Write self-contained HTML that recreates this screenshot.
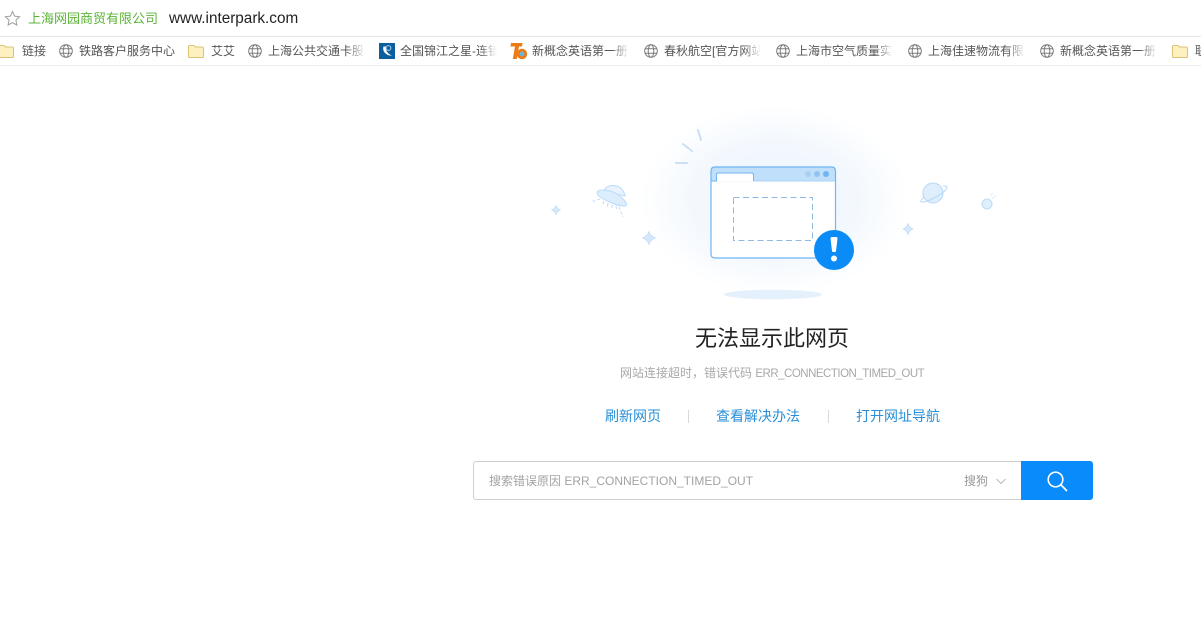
<!DOCTYPE html>
<html lang="zh-CN">
<head>
<meta charset="utf-8">
<title>无法显示此网页</title>
<style>
html,body{margin:0;padding:0;background:#fff}
body{width:1201px;height:635px;position:relative;overflow:hidden;font-family:"Liberation Sans","Noto Sans CJK SC",sans-serif}
.a{position:absolute;white-space:nowrap}
.bm{position:absolute;top:43px;height:17px;line-height:17px;font-size:12px;color:#555;white-space:nowrap;overflow:hidden}
.fade{width:97px;-webkit-mask-image:linear-gradient(90deg,#000 82%,transparent 100%);mask-image:linear-gradient(90deg,#000 82%,transparent 100%)}
.ic{position:absolute}
.link{position:absolute;top:407px;line-height:18px;font-size:14px;color:#2a8fd8;white-space:nowrap}
.sep{position:absolute;top:410px;width:1px;height:13px;background:#d9d9d9}
</style>
</head>
<body>
<svg class="ic" style="left:4px;top:10px" width="17" height="17" viewBox="0 0 17 17"><path d="M8.500 1.500l2.100 4.600 5 .6-3.700 3.400 1 5-4.400-2.500-4.400 2.500 1-5L1.400 6.700l5-.6z" fill="none" stroke="#a0a0a0" stroke-width="1"/></svg>
<div class="a" style="left:28px;top:10px;line-height:18px;font-size:13px;color:#5cb338">上海网园商贸有限公司</div>
<div class="a" style="left:169px;top:9px;line-height:20px;font-size:15.300px;color:#222">www.interpark.com</div>
<div class="a" style="left:0;top:36px;width:1201px;height:1px;background:#e6e6e6"></div>
<div class="a" style="left:0;top:65px;width:1201px;height:1px;background:#ececec"></div>

<svg width="0" height="0" style="position:absolute"><defs>
<g id="globe" fill="none" stroke="#7a7a7a" stroke-width="1"><circle cx="7" cy="7" r="6.300"/><ellipse cx="7" cy="7" rx="2.800" ry="6.300"/><path d="M1.300 4.700h11.400M1.300 9.300h11.400"/></g>
<g id="folder"><path d="M.5 3Q.5 1.500 2 1.500h4l1.500 1.500H14q1.500 0 1.500 1.500v8q0 1-1 1H1.500q-1 0-1-1z" fill="#fdf1c0" stroke="#dcc277"/></g>
</defs></svg>

<svg class="ic" style="left:-2px;top:44px" width="16" height="15"><use href="#folder"/></svg>
<div class="bm" style="left:22px">链接</div>
<svg class="ic" style="left:59px;top:44px" width="14" height="14"><use href="#globe"/></svg>
<div class="bm" style="left:79px">铁路客户服务中心</div>
<svg class="ic" style="left:188px;top:44px" width="16" height="15"><use href="#folder"/></svg>
<div class="bm" style="left:211px">艾艾</div>
<svg class="ic" style="left:248px;top:44px" width="14" height="14"><use href="#globe"/></svg>
<div class="bm fade" style="left:268px">上海公共交通卡股</div>
<svg class="ic" style="left:379px;top:43px" width="16" height="16" viewBox="0 0 16 16"><rect width="16" height="16" fill="#0b5f9e"/><path d="M4.500 3.500C3 8 7 13 13 12.500C9 11 6.500 8 7 3.500z" fill="#fff"/><circle cx="9.500" cy="5" r="2.400" fill="none" stroke="#a9d3ee"/></svg>
<div class="bm fade" style="left:400px">全国锦江之星-连锁</div>
<svg class="ic" style="left:510px;top:42px" width="18" height="18" viewBox="0 0 18 18"><path d="M1 1h11.500l-.6 3.500H9L6.800 17H2.800L5 4.500H.5z" fill="#ee7b16"/><circle cx="12" cy="12" r="5.200" fill="#ee7b16"/><circle cx="12" cy="12" r="2.500" fill="#6cb4dc"/></svg>
<div class="bm fade" style="left:532px">新概念英语第一册</div>
<svg class="ic" style="left:644px;top:44px" width="14" height="14"><use href="#globe"/></svg>
<div class="bm fade" style="left:664px">春秋航空[官方网站</div>
<svg class="ic" style="left:776px;top:44px" width="14" height="14"><use href="#globe"/></svg>
<div class="bm fade" style="left:796px">上海市空气质量实</div>
<svg class="ic" style="left:908px;top:44px" width="14" height="14"><use href="#globe"/></svg>
<div class="bm fade" style="left:928px">上海佳速物流有限</div>
<svg class="ic" style="left:1040px;top:44px" width="14" height="14"><use href="#globe"/></svg>
<div class="bm fade" style="left:1060px">新概念英语第一册</div>
<svg class="ic" style="left:1172px;top:44px" width="16" height="15"><use href="#folder"/></svg>
<div class="bm" style="left:1195px">联</div>

<!-- illustration -->
<svg class="ic" style="left:540px;top:100px" width="470" height="210" viewBox="540 100 470 210">
<defs>
<radialGradient id="glow"><stop offset="0" stop-color="#eaf4fe"/><stop offset=".6" stop-color="#f3f8fe"/><stop offset="1" stop-color="#fff"/></radialGradient>
</defs>
<ellipse cx="775" cy="200" rx="135" ry="95" fill="url(#glow)"/>
<g stroke="#cadff3" stroke-width="2" stroke-linecap="round" fill="none">
<path d="M698 130l3 10M683 144l9 7M676 163h11"/>
</g>
<path d="M711.500 181v-10q0-4 4-4h116q4 0 4 4v10z" fill="#bfdffb"/>
<path d="M711.500 181.500v72q0 4 4 4h116q3 0 3.500-4v-72z" fill="#fff"/>
<path d="M711 181h5.500v-6q0-2 2-2h33q2 0 2 2v6" fill="#fff" stroke="#6fb5f3" stroke-width="1"/>
<path d="M711 181v-10q0-4 4-4h116.500q4 0 4 4v83q0 4-4 4H715q-4 0-4-4z" fill="none" stroke="#6fb5f3" stroke-width="1.200"/>
<path d="M754 181h81" stroke="#a9d3f7" stroke-width="1"/>
<circle cx="808" cy="174" r="3" fill="#a9d0f3"/><circle cx="817" cy="174" r="3" fill="#93c4f1"/><circle cx="826" cy="174" r="3" fill="#72b4f0"/>
<rect x="733.500" y="197.500" width="79" height="43" fill="none" stroke="#8fb9e3" stroke-width="1" stroke-dasharray="6 3.500"/>
<circle cx="834" cy="250" r="20" fill="#0a8bf5"/>
<path d="M830.500 238.500q0-1.500 1.500-1.500h4q1.500 0 1.500 1.500l-1.500 12.500q-.2 1-1 1h-2q-.8 0-1-1z" fill="#fff"/>
<circle cx="834" cy="258.500" r="3" fill="#fff"/>
<ellipse cx="773" cy="294.500" rx="49" ry="4.800" fill="#e4f0fb"/>
<!-- sparkles -->
<g fill="#d6e9fb" stroke="#c2dcf6" stroke-width=".8" stroke-linejoin="round">
<path d="M649 231.500q1.200 4.800 6.500 6.500q-5.300 1.700-6.500 6.500q-1.200-4.800-6.500-6.500q5.300-1.700 6.500-6.500z"/>
<path d="M556 205.500q.8 3.500 4.500 4.500q-3.700 1-4.500 4.500q-.8-3.500-4.500-4.500q3.700-1 4.500-4.500z"/>
<path d="M908 223.500q1 4 5 5.500q-4 1.500-5 5.500q-1-4-5-5.500q4-1.500 5-5.500z"/>
</g>
<!-- ufo -->
<g stroke="#b9dbf8" stroke-width="1">
<path d="M604 191q2-6 10-5.500q9 1 11 10.500z" fill="#e8f3fd"/>
<path d="M597 193q0-3 5-3q8 0 15 4q8 5 9.500 10q.5 2.500-3 2q-7-.5-14-4q-12-5-12.500-9z" fill="#dcedfc"/>
<path d="M604 201l-1 3M608 203l-.5 3.500M612 205l0 3M616 206l.5 3" />
<path d="M600 199l-9 3M619 207l4 10" stroke-dasharray="3 2" fill="none" stroke="#c4ddf4"/>
</g>
<!-- planet -->
<g stroke="#b5d8f7" stroke-width="1" fill="none">
<circle cx="933" cy="193" r="10" fill="#deeefc"/>
<path d="M924 197q-4 4-3 5q3 1 13-4q10-5 13-10q.5-2-4-2"/>
</g>
<!-- comet -->
<circle cx="987" cy="204" r="5" fill="#e0effc" stroke="#bcdcf8"/>
<path d="M992 199l4-4M990 196l3-3" stroke="#e2eefa" stroke-width="1"/>
</svg>

<div class="a" style="left:695px;top:324px;line-height:30px;font-size:22px;color:#222">无法显示此网页</div>
<div class="a" style="left:620px;top:365px;line-height:17px;font-size:12px;color:#a8a8a8">网站连接超时，错误代码 <span style="font-size:11.500px;letter-spacing:-.5px">ERR_CONNECTION_TIMED_OUT</span></div>

<div class="link" style="left:605px">刷新网页</div>
<div class="sep" style="left:688px"></div>
<div class="link" style="left:716px">查看解决办法</div>
<div class="sep" style="left:828px"></div>
<div class="link" style="left:856px">打开网址导航</div>

<div class="a" style="left:473px;top:461px;width:549px;height:37px;border:1px solid #cfcfcf;border-right:0;border-radius:3px 0 0 3px"></div>
<div class="a" style="left:489px;top:473px;line-height:17px;font-size:12px;color:#a3a3a3">搜索错误原因 ERR_CONNECTION_TIMED_OUT</div>
<div class="a" style="left:964px;top:473px;line-height:17px;font-size:12px;color:#999">搜狗</div>
<svg class="ic" style="left:996px;top:478px" width="10" height="7"><path d="M.5 1l4.500 4.500L9.500 1" fill="none" stroke="#bbb"/></svg>
<div class="a" style="left:1021px;top:461px;width:72px;height:39px;background:#0a8bfc;border-radius:0 3px 3px 0"></div>
<svg class="ic" style="left:1045px;top:469px" width="24" height="24" viewBox="0 0 24 24"><circle cx="10.500" cy="10.500" r="7.300" fill="none" stroke="#fff" stroke-width="1.600"/><path d="M15.800 15.800l5.700 5.700" stroke="#fff" stroke-width="1.800" stroke-linecap="round"/></svg>
</body>
</html>
